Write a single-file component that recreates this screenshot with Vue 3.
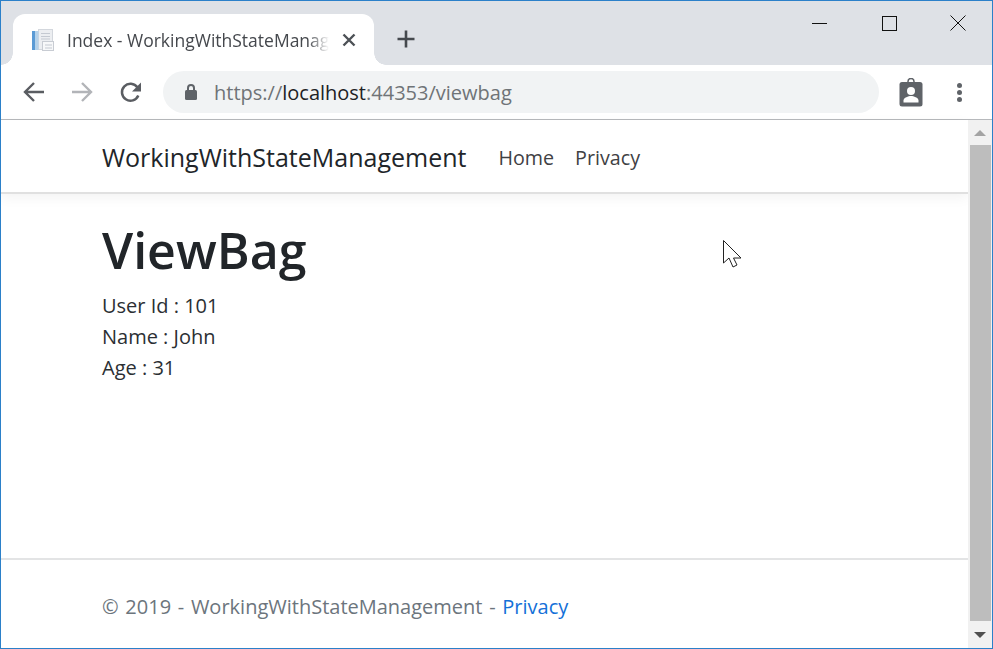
<script setup>
const rows = ['User Id : 101', 'Name : John', 'Age : 31']
</script>

<template>
  <div class="window">
    <div class="tabstrip">
      <div class="tab">
        <svg class="favicon" width="24" height="24" viewBox="0 0 24 24">
          <rect x="7.500" y="1.500" width="14" height="20" fill="#eceef1" stroke="#d3d7dd" />
          <rect x="1" y="3" width="3" height="19" fill="#5b9bd5" />
          <rect x="4" y="3" width="3.500" height="19" fill="#b5d2ea" />
          <rect x="11.500" y="13.500" width="11" height="9" fill="#f7f8f9" stroke="#c8ccd3" />
          <path d="M10 5.500h9M10 8.500h9M10 11h9M14 17h7M14 20h7" stroke="#c4c9d1" fill="none" />
        </svg>
        <span class="tab-title">Index - WorkingWithStateManag</span>
        <svg class="tab-close" width="16" height="16" viewBox="0 0 16 16">
          <path d="M2.500 2.500l11 11M13.500 2.500l-11 11" stroke="#4d5156" stroke-width="2.400" fill="none" />
        </svg>
      </div>
      <svg class="new-tab" width="20" height="20" viewBox="0 0 20 20">
        <path d="M10 1.500v17M1.500 10h17" stroke="#45494e" stroke-width="2.600" fill="none" />
      </svg>
      <div class="caption">
        <svg width="16" height="16" viewBox="0 0 16 16"><path d="M0 8.500h15" stroke="#111" fill="none" /></svg>
        <svg width="16" height="16" viewBox="0 0 16 16"><rect x="1.500" y="1.500" width="14" height="14" stroke="#111" fill="none" /></svg>
        <svg width="16" height="16" viewBox="0 0 16 16"><path d="M.5 .5l15 15M15.500 .5l-15 15" stroke="#111" fill="none" /></svg>
      </div>
    </div>

    <div class="toolbar">
      <svg class="tool" width="24" height="24" viewBox="0 0 24 24">
        <path d="M22 12H3.500M12 3l-9 9 9 9" stroke="#5a5d62" stroke-width="2.400" fill="none" />
      </svg>
      <svg class="tool wide" width="24" height="24" viewBox="0 0 24 24">
        <path d="M2 12h18.500M12 3l9 9-9 9" stroke="#b2b4b8" stroke-width="2.400" fill="none" />
      </svg>
      <svg class="tool" width="24" height="24" viewBox="0 0 24 24">
        <path d="M19.300 15.500a8.500 8.500 0 1 1-.9-8.200" stroke="#5a5d62" stroke-width="2.500" fill="none" />
        <path d="M22 2.500v9h-9z" fill="#5a5d62" />
      </svg>
      <div class="omnibox">
        <svg class="lock" width="14" height="18" viewBox="0 0 14 18">
          <path d="M4 7V5a3 3 0 0 1 6 0v2" stroke="#5f6368" stroke-width="2" fill="none" />
          <rect x="1" y="7" width="12" height="10" rx="1.500" fill="#5f6368" />
        </svg>
        <span class="url"><span class="scheme">https://</span><span class="host">localhost</span><span class="rest">:44353/viewbag</span></span>
      </div>
      <svg class="badge" width="24" height="29" viewBox="0 0 24 29">
        <path d="M9 5V3.500a3 3 0 0 1 6 0V5" stroke="#5f6368" stroke-width="1.500" fill="none" />
        <rect x="0.500" y="4" width="23" height="24.500" rx="2.500" fill="#5f6368" />
        <circle cx="12" cy="13" r="4" fill="#fff" />
        <path d="M4.500 24.500v-2c0-3 5-4.500 7.500-4.500s7.500 1.500 7.500 4.500v2z" fill="#fff" />
      </svg>
      <div class="dots"><i></i><i></i><i></i></div>
    </div>

    <div class="viewport">
      <div class="page">
        <nav class="navbar">
          <a class="brand">WorkingWithStateManagement</a>
          <a class="nav-link">Home</a>
          <a class="nav-link">Privacy</a>
        </nav>
        <main class="content">
          <h1>ViewBag</h1>
          <div v-for="r in rows" :key="r" class="row">{{ r }}</div>
          <svg class="cursor" width="20" height="29" viewBox="0 0 20 29">
            <path d="M.5 .5V23L6 18l4 9 4-2-3.500-7H18z" fill="#fff" stroke="#222" stroke-width="1" />
          </svg>
        </main>
        <footer class="footer">© 2019 - WorkingWithStateManagement - <a class="link">Privacy</a></footer>
      </div>
      <div class="scrollbar">
        <div class="arrow top"><span class="up"></span></div>
        <div class="track"><div class="thumb"></div></div>
        <div class="arrow bottom"><span class="down"></span></div>
      </div>
    </div>
  </div>
</template>

<style>
html, body { margin: 0; background: #fff; overflow: hidden; }
</style>

<style scoped>
.window {
  width: 993px;
  height: 649px;
  box-sizing: border-box;
  border: 1px solid #2b80c9;
  display: flex;
  flex-direction: column;
  font-family: "Open Sans", "Noto Sans", sans-serif;
  overflow: hidden;
  background: #fff;
}
.tabstrip {
  height: 64px;
  background: #dee1e6;
  display: flex;
  align-items: flex-end;
  position: relative;
  flex: none;
}
.tab {
  width: 361px;
  height: 51px;
  margin-left: 12px;
  background: #fff;
  border-radius: 12px 12px 0 0;
  display: flex;
  align-items: center;
  padding: 0 17px 0 18px;
  box-sizing: border-box;
  position: relative;
  flex: none;
}
.tab::before,
.tab::after {
  content: "";
  position: absolute;
  bottom: 0;
  width: 12px;
  height: 12px;
}
.tab::before {
  left: -12px;
  background: radial-gradient(circle at 0 0, #dee1e6 11.500px, #fff 12px);
}
.tab::after {
  right: -12px;
  background: radial-gradient(circle at 100% 0, #dee1e6 11.500px, #fff 12px);
}
.favicon { flex: none; }
.tab-title {
  margin-left: 12px;
  width: 262px;
  flex: none;
  font-size: 17.500px;
  color: #45484d;
  white-space: nowrap;
  -webkit-mask-image: linear-gradient(to right, #000 92%, transparent 100%);
  mask-image: linear-gradient(to right, #000 92%, transparent 100%);
}
.tab-close { margin-left: 12px; flex: none; }
.new-tab { margin: 0 0 16px 22px; }
.caption {
  position: absolute;
  top: 14px;
  right: 26px;
  display: flex;
  gap: 53px;
}
.toolbar {
  height: 54px;
  background: #fff;
  border-bottom: 1px solid #b7b9bc;
  display: flex;
  align-items: center;
  flex: none;
  padding-left: 21px;
}
.tool { margin-right: 24px; flex: none; }
.tool.wide { margin-right: 25px; }
.omnibox {
  width: 716px;
  height: 42px;
  margin-left: -4px;
  border-radius: 21px;
  background: #f1f3f4;
  display: flex;
  align-items: center;
  padding-left: 21px;
  box-sizing: border-box;
  flex: none;
}
.lock { flex: none; }
.url { margin-left: 16px; font-size: 20px; white-space: nowrap; }
.scheme, .rest { color: #6f7377; }
.host { color: #202124; }
.badge { margin-left: 20px; flex: none; }
.dots {
  margin-left: 34px;
  display: flex;
  flex-direction: column;
  gap: 2px;
}
.dots i {
  width: 5px;
  height: 5px;
  border-radius: 50%;
  background: #5f6368;
}
.viewport {
  flex: 1;
  display: flex;
  min-height: 0;
}
.page {
  width: 967px;
  flex: none;
  display: flex;
  flex-direction: column;
  color: #212529;
}
.navbar {
  height: 74px;
  box-sizing: border-box;
  border-bottom: 2px solid #e0e0e0;
  box-shadow: 0 4px 12px rgba(0, 0, 0, .05);
  display: flex;
  align-items: center;
  padding: 2px 0 0 101px;
  flex: none;
}
.brand { font-size: 25px; margin-right: 32px; color: #212529; }
.nav-link { font-size: 19.700px; margin-right: 21px; color: #3f4144; }
.content {
  flex: 1;
  padding: 26px 0 0 101px;
  position: relative;
}
h1 {
  margin: 0 0 9px;
  font-size: 50px;
  line-height: 61px;
  font-weight: 600;
  color: #212529;
}
.row { font-size: 20px; line-height: 31px; color: #2b2f33; }
.cursor { position: absolute; left: 722px; top: 46px; }
.footer {
  height: 90px;
  box-sizing: border-box;
  border-top: 2px solid #e3e4e5;
  padding: 33px 0 0 101px;
  font-size: 20px;
  word-spacing: 1.500px;
  line-height: 28px;
  color: #6c757d;
  flex: none;
}
.link { color: #1470d8; }
.scrollbar {
  width: 24px;
  flex: none;
  background: #f1f1f1;
  display: flex;
  flex-direction: column;
}
.arrow {
  flex: none;
  display: flex;
  align-items: center;
  justify-content: center;
}
.arrow.top { height: 25px; }
.arrow.bottom { height: 27px; }
.up, .down {
  width: 0;
  height: 0;
  border-left: 6px solid transparent;
  border-right: 6px solid transparent;
}
.up { border-bottom: 6px solid #a3a3a3; }
.down { border-top: 6px solid #505050; }
.track { flex: 1; padding: 0 1px 0 2px; display: flex; }
.thumb { flex: 1; background: #bdbdbd; }
</style>
